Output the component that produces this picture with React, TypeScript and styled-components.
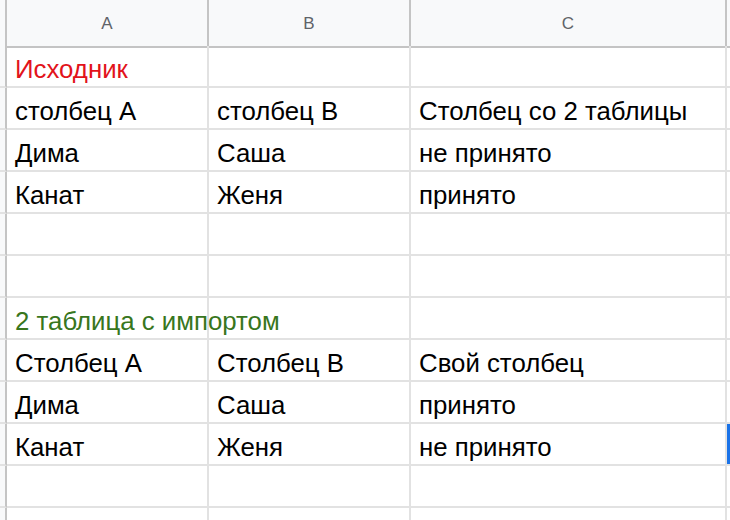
import React from "react";
import styled, { createGlobalStyle } from "styled-components";

const HEADER_HEIGHT = "46px";
const ROW_HEIGHT = "42px";
const GRID_LINE = "#e2e2e2";
const HEADER_LINE = "#c4c4c4";

const GlobalStyle = createGlobalStyle`
  html, body {
    margin: 0;
    padding: 0;
    background: #ffffff;
    overflow: hidden;
  }
`;

const Sheet = styled.div`
  width: 730px;
  height: 520px;
  overflow: hidden;
  font-family: "Liberation Sans", Arial, sans-serif;
  background: #ffffff;
`;

const Grid = styled.div`
  display: grid;
  grid-template-columns: 7px 202px 202px 316px 120px;
  grid-auto-rows: ${ROW_HEIGHT};
  grid-template-rows: ${HEADER_HEIGHT};
  width: max-content;
`;

const Corner = styled.div`
  background: #f8f9fa;
  border-right: 2px solid ${HEADER_LINE};
  border-bottom: 2px solid ${HEADER_LINE};
  box-sizing: border-box;
  height: calc(${HEADER_HEIGHT} + 2px);
`;

const ColHeader = styled.div`
  display: flex;
  align-items: center;
  justify-content: center;
  background: #f8f9fa;
  color: #5f6368;
  font-size: 17px;
  padding-top: 2px;
  border-right: 2px solid ${HEADER_LINE};
  border-bottom: 2px solid ${HEADER_LINE};
  box-sizing: border-box;
  height: calc(${HEADER_HEIGHT} + 2px);
`;

const RowHeader = styled.div`
  background: #f8f9fa;
  border-right: 2px solid ${HEADER_LINE};
  border-bottom: 2px solid ${GRID_LINE};
  box-sizing: border-box;
`;

const Cell = styled.div<{ $color?: string; $selected?: boolean }>`
  display: flex;
  align-items: center;
  padding: 6px 0 0 8px;
  font-size: 25.8px;
  color: ${(p) => p.$color || "#000000"};
  white-space: nowrap;
  overflow: visible;
  border-right: 2px solid ${GRID_LINE};
  border-bottom: 2px solid ${GRID_LINE};
  box-sizing: border-box;
  position: relative;
  z-index: ${(p) => (p.$color ? 1 : 0)};
  box-shadow: ${(p) => (p.$selected ? "inset 3px 0 0 #1a73e8" : "none")};
`;

type Row = {
  cells: string[];
  color?: string;
};

const RED = "#e2131b";
const GREEN = "#38761d";

const rows: Row[] = [
  { cells: ["Исходник", "", ""], color: RED },
  { cells: ["столбец А", "столбец В", "Столбец со 2 таблицы"] },
  { cells: ["Дима", "Саша", "не принято"] },
  { cells: ["Канат", "Женя", "принято"] },
  { cells: ["", "", ""] },
  { cells: ["", "", ""] },
  { cells: ["2 таблица с импортом", "", ""], color: GREEN },
  { cells: ["Столбец А", "Столбец В", "Свой столбец"] },
  { cells: ["Дима", "Саша", "принято"] },
  { cells: ["Канат", "Женя", "не принято"] },
  { cells: ["", "", ""] },
  { cells: ["", "", ""] },
];

export default function App() {
  return (
    <Sheet>
      <GlobalStyle />
      <Grid>
        <Corner />
        <ColHeader>A</ColHeader>
        <ColHeader>B</ColHeader>
        <ColHeader>C</ColHeader>
        <ColHeader />
        {rows.map((row, i) => (
          <React.Fragment key={i}>
            <RowHeader />
            {row.cells.map((text, j) => (
              <Cell key={j} $color={row.color}>
                {text}
              </Cell>
            ))}
            <Cell $selected={i === 9} />
          </React.Fragment>
        ))}
      </Grid>
    </Sheet>
  );
}
